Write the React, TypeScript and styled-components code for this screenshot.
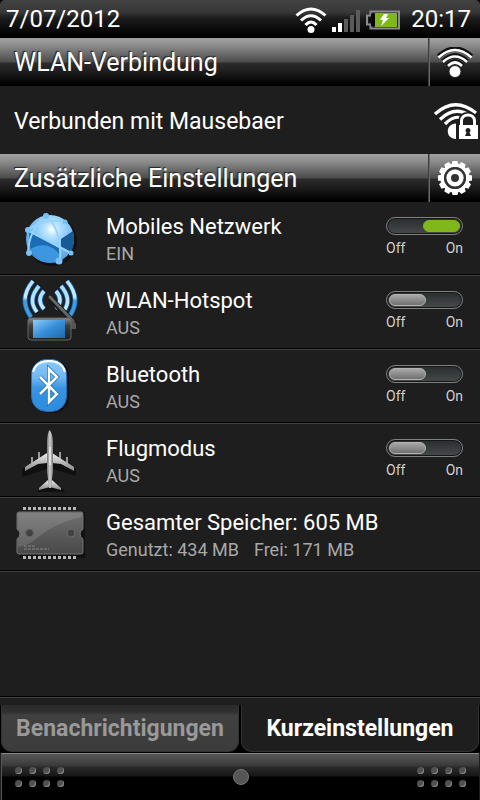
import React, { useState } from "react";
import styled, { createGlobalStyle } from "styled-components";

const GlobalStyle = createGlobalStyle`
  *, *::before { box-sizing: border-box; }
  body {
    margin: 0;
    background: #000;
    color: #fff;
    font-family: Roboto, "Noto Sans", sans-serif;
  }
  button { font-family: inherit; }
`;

const Screen = styled.div`
  display: flex;
  flex-direction: column;
  min-height: 100vh;
  background: #1e1e1e;
`;

const StatusBar = styled.header`
  display: flex;
  align-items: center;
  height: 38px;
  padding: 0 9px 0 6px;
  border-radius: 5px 5px 0 0;
  background: linear-gradient(#424242 0, #383838 12px, #1c1c1c 18px, #0c0c0c 28px, #000 36px);
  box-shadow: 0 -6px 0 6px #000;
  font-size: 24px;
  line-height: 40px;
`;

const StatusIcons = styled.div`
  display: flex;
  align-items: center;
  gap: 5px;
  margin-left: auto;
  margin-right: 11px;
  padding-top: 2px;
`;

const SectionBar = styled.div`
  display: flex;
  height: 48px;
  background: linear-gradient(#a2a2a2 0, #8a8a8a 8px, #626262 18px, #4c4c4c 24px, #2c2c2c 25px, #1c1c1c 34px, #000 46px);
`;

const SectionTitle = styled.h2`
  flex: 1;
  margin: 0;
  padding-left: 14px;
  font-size: 25px;
  font-weight: 400;
  line-height: 50px;
  text-shadow: -1px -1px 1px #222;
`;

const SectionButton = styled.button`
  display: grid;
  place-items: center;
  width: 51px;
  padding: 0;
  border: 0;
  border-left: 1px solid #6a6a6a;
  background: none;
  box-shadow: -1px 0 0 #3c3c3c;
  color: #fff;
`;

const Connection = styled.div`
  display: flex;
  align-items: center;
  justify-content: space-between;
  height: 68px;
  padding: 2px 2px 0 14px;
  font-size: 23px;
`;

const List = styled.ul`
  flex: 1;
  margin: 0;
  padding: 0;
  list-style: none;
  border-bottom: 1px solid #000;
`;

const Row = styled.li`
  display: flex;
  align-items: center;
  height: 74px;
  padding: 0 17px 0 14px;
  border-bottom: 1px solid #424242;
  box-shadow: inset 0 -1px 0 #000;
`;

const RowIcon = styled.div`
  display: flex;
  width: 92px;
`;

const RowText = styled.div`
  flex: 1;
  padding-top: 2px;
`;

const RowTitle = styled.div`
  font-size: 22px;
  line-height: 28px;
`;

const RowDetail = styled.div`
  display: flex;
  gap: 15px;
  color: #a8a8a8;
  font-size: 18px;
  line-height: 26px;
`;

const SwitchLabel = styled.label`
  display: block;
  width: 77px;
  padding-bottom: 4px;
`;

const SwitchInput = styled.input`
  appearance: none;
  display: flex;
  align-items: center;
  width: 100%;
  height: 18px;
  margin: 0;
  padding: 0 2px;
  border: 1px solid #808080;
  border-radius: 9px;
  background: linear-gradient(#2a2d2d, #474a4a);
  box-shadow: inset 0 0 0 1px #161616;

  &::before {
    content: "";
    width: 37px;
    height: 12px;
    border: 1px solid #b4b4b4;
    border-radius: 6px;
    background: linear-gradient(#a8a8a8, #707070);
  }
  &:checked {
    justify-content: flex-end;
  }
  &:checked::before {
    border-color: #80b81c;
    background: #80b81c;
  }
`;

const SwitchCaptions = styled.span`
  display: flex;
  justify-content: space-between;
  color: #d0d0d0;
  font-size: 14px;
  line-height: 16px;
  padding-top: 5px;
`;

const Tabs = styled.div`
  display: grid;
  grid-template-columns: 1fr 1fr;
  gap: 2px;
  height: 56px;
  padding: 0 1px;
  border-top: 1px solid #424242;
  background: linear-gradient(#1e1e1e 7px, #000 7px);
`;

const Tab = styled.button<{ $active?: boolean }>`
  margin: 7px 0 1px;
  padding: 2px 0 0;
  border: 1px solid #333;
  border-top: 0;
  border-radius: 0 0 11px 11px;
  background: ${(p) =>
    p.$active ? "#1e1e1e" : "linear-gradient(#2a2a2a 0, #303030 7px, #404040 10px, #3c3c3c 100%)"};
  color: ${(p) => (p.$active ? "#fff" : "#999")};
  font-size: 23px;
  font-weight: 700;
  line-height: 44px;
`;

const Handle = styled.footer`
  display: flex;
  align-items: center;
  justify-content: space-between;
  height: 47px;
  margin: 0 1px;
  padding: 0 13px;
  border-top: 1px solid #858585;
  border-left: 1px solid #555;
  background: linear-gradient(#555 0, #464646 7px, #383838 12px, #2a2a2a 13px, #161616 22px, #000 23px);
`;

const Knob = styled.span`
  width: 16px;
  height: 16px;
  border: 1px solid #777;
  border-radius: 50%;
  background: #555;
`;

const Grip = styled.span`
  display: grid;
  grid-template-columns: repeat(4, 7px);
  gap: 6px 7px;
`;

const GripDot = styled.i`
  height: 7px;
  border-radius: 50%;
  background: #505050;
  box-shadow: inset -1px -1px 0 #858585;
`;

const WifiIcon = () => (
  <svg width="32" height="27" viewBox="0 0 32 27" fill="none" stroke="#fff" strokeWidth="3" aria-label="WLAN">
    <path d="M1.5 8.5Q16-4.5 30.500 8.5" />
    <path d="M6 13.500Q16 4 26 13.500" />
    <path d="M10.500 18Q16 12 21.500 18" />
    <circle cx="16" cy="22.500" r="3.500" fill="#fff" stroke="none" />
  </svg>
);

const SignalIcon = () => (
  <svg width="29" height="26" viewBox="0 -3 29 26" aria-label="Signal">
    <path fill="#fff" d="M0 17h4v5H0zM6 13h4v9H6z" />
    <path fill="#5a5a5a" d="M12 9h4v13h-4zM18 5h4v17h-4zM24 0h4v22h-4z" />
  </svg>
);

const BatteryIcon = () => (
  <svg width="34" height="20" viewBox="0 0 34 20" aria-label="Akku">
    <path d="M4.500 1.500H33V18.500H4.500V14.500H1V5.500H4.500Z" fill="#1e1e1e" stroke="#8a8a8a" strokeWidth="2" />
    <path d="M5 4h4v12H5zM3 8h3v4H3z" fill="#080808" />
    <path d="M9 3h22v14H9z" fill="#80b81c" />
    <path d="M18 4h4l-2 4h3l-8 8 2-6h-3z" fill="#fff" />
  </svg>
);

const LargeWifiIcon = () => (
  <svg width="36" height="31" viewBox="0 0 36 31" fill="none" aria-hidden="true">
    <path d="M1.500 9.500Q18-5.500 34.500 9.500M6 14.500Q18 3 30 14.500M10.500 19Q18 10.500 25.500 19" stroke="#111" strokeWidth="5" />
    <path d="M1.500 10.500Q18-4.500 34.500 10.500M6 15Q18 4 30 15M11 19Q18 12 25 19" stroke="#fff" strokeWidth="2.600" />
    <circle cx="18" cy="24.500" r="6" fill="#fff" stroke="#222" />
  </svg>
);

const SecureWifiIcon = () => (
  <svg width="44" height="37" viewBox="0 0 44 37" fill="none" aria-label="Gesichertes WLAN">
    <path d="M1 11Q21-7 42 10M6 16.500Q21 2 36 13M11 21Q20 12 27 15" stroke="#fff" strokeWidth="3.200" />
    <path d="M22 20.500V36C11 36 11 20.500 22 20.500Z" fill="#fff" />
    <path d="M24 36V18q1-9 10-9t10 9v18z" fill="#1e1e1e" />
    <path d="M27.500 23v-5c0-8 13-8 13 0v5" stroke="#fff" strokeWidth="3" />
    <path d="M25 22h19v14H25z" fill="#fff" />
    <path d="M34 25a2.500 2.500 0 0 1 1.500 4.500L37 33h-6l1.500-3.500A2.500 2.500 0 0 1 34 25z" fill="#1e1e1e" />
  </svg>
);

const teeth = Array.from({ length: 12 }, (_, i) => i * 30);

const GearIcon = () => (
  <svg width="36" height="36" viewBox="-18 -18 36 36" fill="none" aria-hidden="true">
    {teeth.map((a) => (
      <path key={a} d="M-3.500-13L-2.500-17H2.500L3.500-13Z" fill="#fff" transform={`rotate(${a})`} />
    ))}
    <circle r="12.700" stroke="#fff" strokeWidth="3.400" />
    <circle r="10" stroke="#333" strokeWidth="2" />
    <circle r="6.300" fill="#333" stroke="#fff" strokeWidth="4.600" />
  </svg>
);

const GlobeIcon = () => (
  <svg width="70" height="64" viewBox="0 0 70 64" fill="none" aria-hidden="true">
    <defs>
      <radialGradient id="globe" cx=".54" cy=".3" r=".72">
        <stop offset="0" stopColor="#fff" />
        <stop offset=".2" stopColor="#b8e4ff" />
        <stop offset=".6" stopColor="#74bcf4" />
        <stop offset="1" stopColor="#4c9fe2" />
      </radialGradient>
    </defs>
    <circle cx="38" cy="34" r="25" fill="#101010" />
    <circle cx="36" cy="32" r="24" fill="url(#globe)" />
    <path d="M15 24L47 42L44 55Q26 58 16 44Z" fill="#1c6cb5" />
    <path d="M16 42Q34 32 46 48L44 55Q24 58 16 42Z" fill="#3c96e0" />
    <path d="M47 41L47 32L59 24Q62 34 57 45Z" fill="#185a94" />
    <g stroke="#98d3fb" strokeWidth="2">
      <path d="M13 23L57 46M32 9Q48 22 46 53M32 9Q15 22 14 46M14 23Q28 12 51 14" />
    </g>
    <g fill="#78c2f8">
      <circle cx="32" cy="9" r="3" /><circle cx="14" cy="23" r="3" />
      <circle cx="15" cy="46" r="3" /><circle cx="45" cy="54" r="3.500" />
      <circle cx="57" cy="46" r="2.500" /><circle cx="51" cy="15" r="2.500" />
    </g>
  </svg>
);

const HotspotIcon = () => (
  <svg width="70" height="68" viewBox="0 1 70 68" fill="none" aria-hidden="true">
    <defs>
      <linearGradient id="wave" x1="0" y1="0" x2="0" y2="1">
        <stop offset="0" stopColor="#b8e4ff" /><stop offset=".45" stopColor="#c8ebff" />
        <stop offset=".55" stopColor="#3e9ce4" /><stop offset="1" stopColor="#3e9ce4" />
      </linearGradient>
      <linearGradient id="innerWave" x1="0" y1="0" x2="0" y2="1">
        <stop offset="0" stopColor="#a8dcff" /><stop offset="1" stopColor="#c8ebff" />
      </linearGradient>
      <linearGradient id="display" x1="0" y1="0" x2="1" y2="1">
        <stop offset="0" stopColor="#8cccf8" /><stop offset=".5" stopColor="#3890da" />
        <stop offset="1" stopColor="#1c67ac" />
      </linearGradient>
      <linearGradient id="phone" x1="0" y1="0" x2="0" y2="1">
        <stop offset="0" stopColor="#8a8a8a" /><stop offset=".35" stopColor="#3c3c3c" />
        <stop offset="1" stopColor="#202020" />
      </linearGradient>
    </defs>
    <path d="M19 3Q4 21 17 39M25 8Q13 22 23 34M30 13Q22 22 30 31M53 3Q68 21 55 39M47 8Q59 22 49 34M42 13Q50 22 42 31" stroke="#1761a3" strokeWidth="5" />
    <path d="M19 3Q4 21 17 39M53 3Q68 21 55 39" stroke="url(#wave)" strokeWidth="3.500" />
    <path d="M25 8Q13 22 23 34M47 8Q59 22 49 34M30 13Q22 22 30 31M42 13Q50 22 42 31" stroke="url(#innerWave)" strokeWidth="3.500" />
    <path d="M37 21L60 45" stroke="#1a1a1a" strokeWidth="6" />
    <path d="M36 19L59 43" stroke="#666" strokeWidth="3" strokeLinecap="round" />
    <path d="M55 46l3-5 4 5v5h-7z" fill="#555" />
    <rect x="14" y="40" width="43" height="22" rx="3" fill="url(#phone)" stroke="#666" />
    <rect x="19" y="42" width="32" height="18" fill="url(#display)" />
  </svg>
);

const BluetoothIcon = () => (
  <svg width="70" height="64" viewBox="0 1 70 64" fill="none" aria-hidden="true">
    <defs>
      <linearGradient id="blue" x1="0" y1="0" x2="0" y2="1">
        <stop offset="0" stopColor="#8ccafa" /><stop offset=".35" stopColor="#70b7f0" />
        <stop offset=".55" stopColor="#3894e2" /><stop offset="1" stopColor="#2e8bdc" />
      </linearGradient>
    </defs>
    <rect x="19" y="6" width="36" height="53" rx="16" fill="#0c0c0c" />
    <rect x="17.500" y="5.500" width="35" height="52" rx="15" fill="url(#blue)" stroke="#1d72bd" />
    <path d="M19 18Q22 7 35 7Q48 7 51 18" stroke="#fff" strokeWidth="2" />
    <path d="M26 23L43 40L35 48V15L43 23L26 40" stroke="#1b6db4" strokeWidth="4" />
    <path d="M26 23L43 40L35 48V15L43 23L26 40" stroke="#fff" strokeWidth="2.500" />
  </svg>
);

const PlaneIcon = () => (
  <svg width="70" height="66" viewBox="0 1 70 66" fill="none" aria-hidden="true">
    <defs>
      <linearGradient id="body" x1="0" y1="0" x2="1" y2="0">
        <stop offset="0" stopColor="#777" /><stop offset=".5" stopColor="#d0d0d0" />
        <stop offset="1" stopColor="#777" />
      </linearGradient>
      <linearGradient id="wing" x1="0" y1="0" x2="0" y2="1">
        <stop offset="0" stopColor="#eee" /><stop offset="1" stopColor="#888" />
      </linearGradient>
    </defs>
    <path d="M33 29L8 42V50L33 42V54L23 65H52L39 54V42L62 49V42L39 29V8H33Z" fill="#101010" />
    <path d="M18 30v7M25 25v8M46 25v8M53 30v7" stroke="#999" strokeWidth="2" />
    <path d="M33 26L11 40V44L24 37L33 36ZM38 26L60 40V44L47 37L38 36Z" fill="url(#wing)" />
    <path d="M34 53L25 61V63L36 60L47 63V61L38 53Z" fill="url(#wing)" />
    <path d="M35.500 3Q39 7 39 15V45L37 61H35L33 45V15Q33 7 35.500 3Z" fill="url(#body)" />
    <path d="M36 20V38" stroke="#fff" strokeWidth="1" />
  </svg>
);

const pins = Array.from({ length: 11 }, (_, i) => 9 + i * 5);

const ChipIcon = () => (
  <svg width="74" height="60" viewBox="0 2 74 60" fill="none" aria-hidden="true">
    <defs>
      <linearGradient id="chip" x1="0" y1="0" x2="0" y2="1">
        <stop offset="0" stopColor="#707070" /><stop offset="1" stopColor="#484848" />
      </linearGradient>
    </defs>
    <path d="M6 9H71V55H6Z" fill="#111" />
    {pins.map((x) => (
      <path key={x} d={`M${x} 4h3v3h-3zM${x} 53h3v3h-3z`} fill="#b8b8b8" />
    ))}
    <path d="M5 9H67Q69 9 69 11V26Q63 31 69 36V49Q69 51 67 51H5Q3 51 3 49V36Q9 31 3 26V11Q3 9 5 9Z" fill="url(#chip)" stroke="#737373" />
    <path d="M4 10H68V14Q40 20 22 36Q15 42 4 44V36Q9 31 4 26Z" fill="#fff" opacity=".12" />
    <circle cx="15.500" cy="30" r="4" fill="#424242" stroke="#6a6a6a" />
    <circle cx="57" cy="30" r="4" fill="#424242" stroke="#6a6a6a" />
    <path d="M10 43h11M10 46h25" stroke="#888" strokeDasharray="3 1" />
  </svg>
);

const settings = [
  { name: "Mobiles Netzwerk", on: true, Icon: GlobeIcon },
  { name: "WLAN-Hotspot", on: false, Icon: HotspotIcon },
  { name: "Bluetooth", on: false, Icon: BluetoothIcon },
  { name: "Flugmodus", on: false, Icon: PlaneIcon },
];

function SettingRow({ name, on, Icon }: { name: string; on: boolean; Icon: React.FC }) {
  const [checked, setChecked] = useState(on);
  return (
    <Row>
      <RowIcon><Icon /></RowIcon>
      <RowText>
        <RowTitle>{name}</RowTitle>
        <RowDetail>{checked ? "EIN" : "AUS"}</RowDetail>
      </RowText>
      <SwitchLabel>
        <SwitchInput
          type="checkbox"
          role="switch"
          aria-label={name}
          checked={checked}
          onChange={(e) => setChecked(e.target.checked)}
        />
        <SwitchCaptions><span>Off</span><span>On</span></SwitchCaptions>
      </SwitchLabel>
    </Row>
  );
}

const GripDots = () => (
  <Grip>{Array.from({ length: 8 }, (_, i) => <GripDot key={i} />)}</Grip>
);

export default function App() {
  return (
    <>
      <GlobalStyle />
      <Screen>
        <StatusBar>
          <span>7/07/2012</span>
          <StatusIcons><WifiIcon /><SignalIcon /><BatteryIcon /></StatusIcons>
          <span>20:17</span>
        </StatusBar>
        <SectionBar>
          <SectionTitle>WLAN-Verbindung</SectionTitle>
          <SectionButton aria-label="WLAN-Verbindung"><LargeWifiIcon /></SectionButton>
        </SectionBar>
        <Connection>
          <span>Verbunden mit Mausebaer</span>
          <SecureWifiIcon />
        </Connection>
        <SectionBar>
          <SectionTitle>Zusätzliche Einstellungen</SectionTitle>
          <SectionButton aria-label="Zusätzliche Einstellungen"><GearIcon /></SectionButton>
        </SectionBar>
        <List>
          {settings.map((s) => <SettingRow key={s.name} {...s} />)}
          <Row>
            <RowIcon><ChipIcon /></RowIcon>
            <RowText>
              <RowTitle>Gesamter Speicher: 605 MB</RowTitle>
              <RowDetail><span>Genutzt: 434 MB</span><span>Frei: 171 MB</span></RowDetail>
            </RowText>
          </Row>
        </List>
        <Tabs role="tablist">
          <Tab role="tab" aria-selected={false}>Benachrichtigungen</Tab>
          <Tab role="tab" aria-selected $active>Kurzeinstellungen</Tab>
        </Tabs>
        <Handle><GripDots /><Knob /><GripDots /></Handle>
      </Screen>
    </>
  );
}
